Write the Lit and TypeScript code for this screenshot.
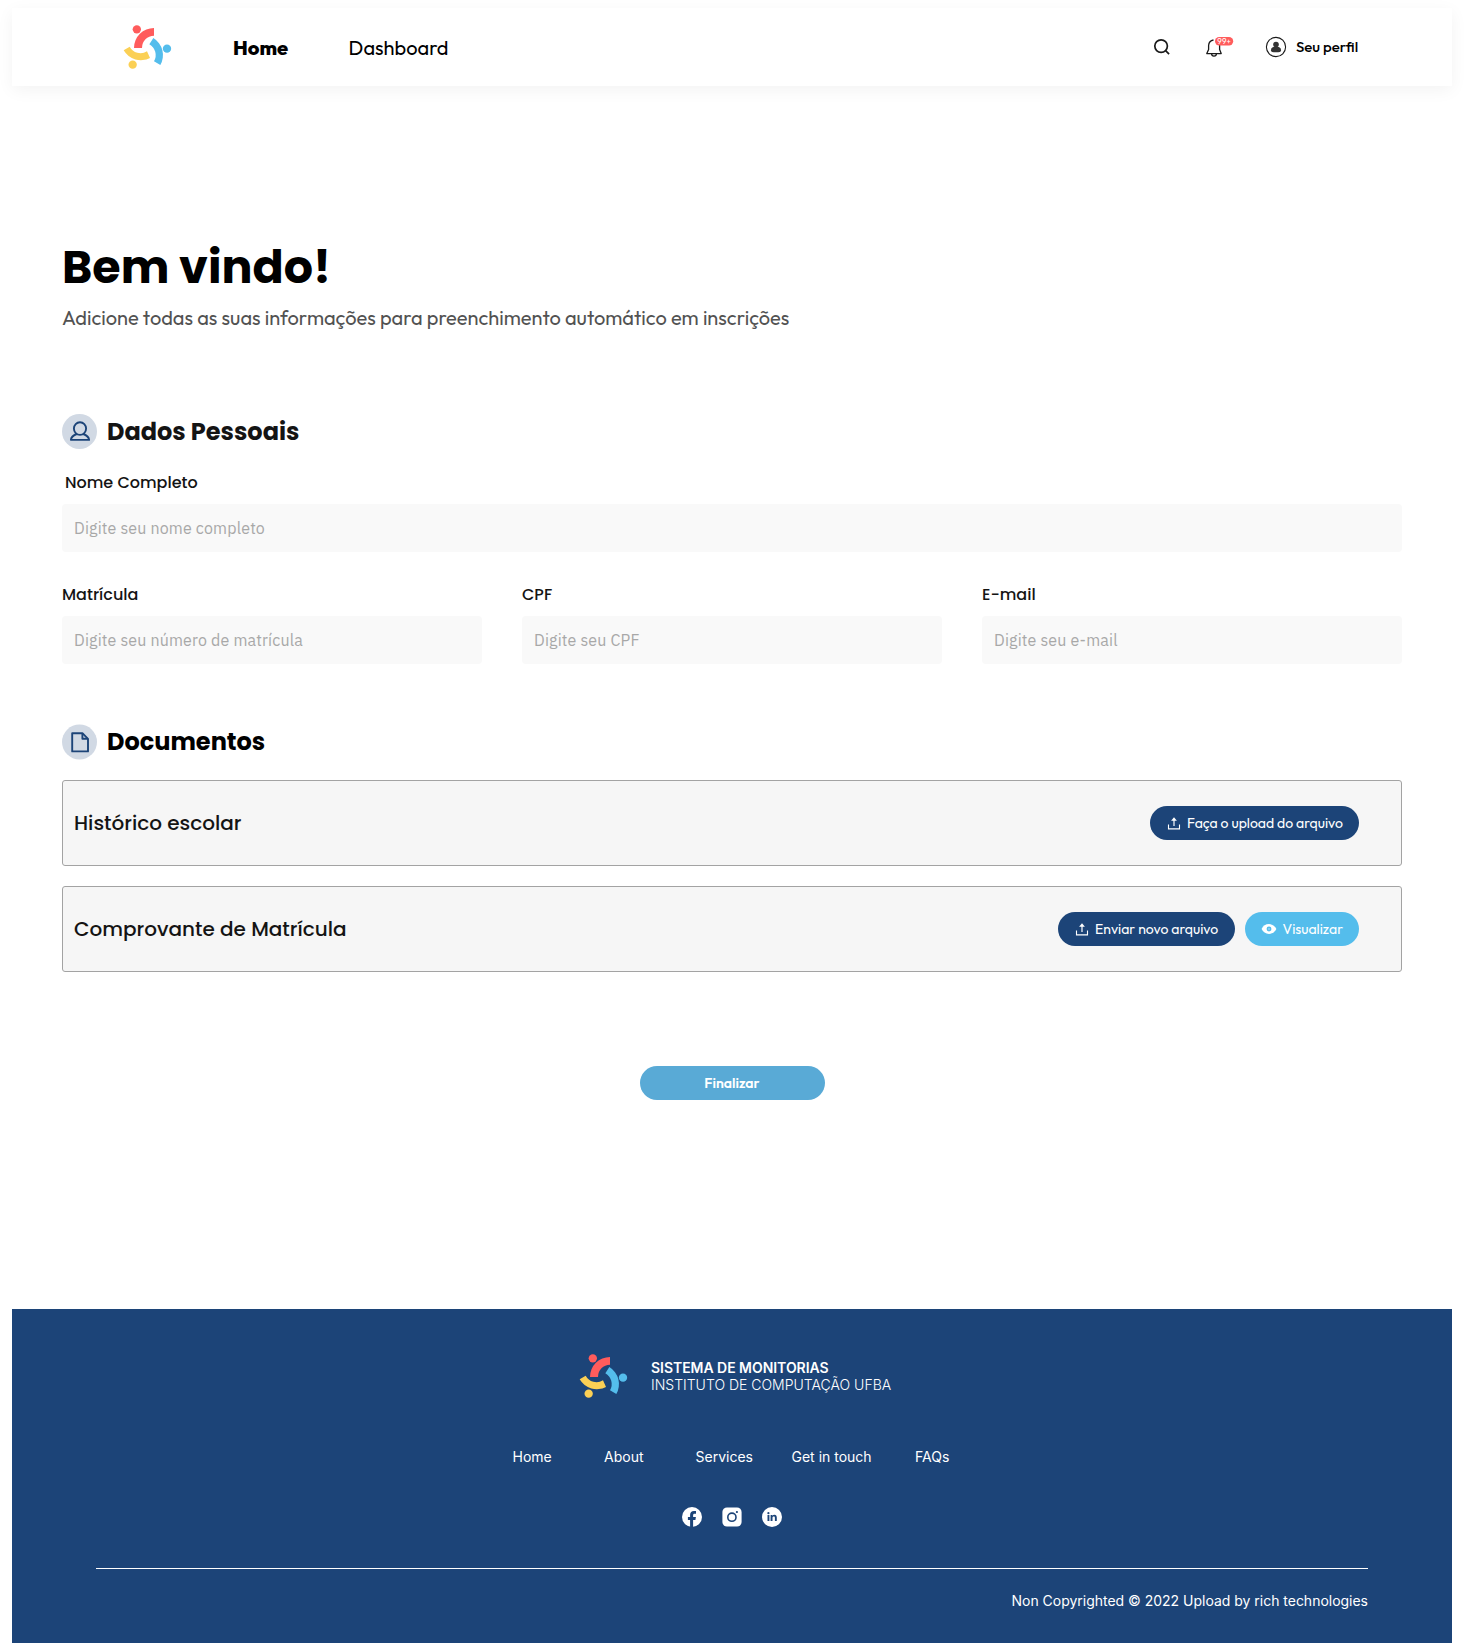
import { LitElement, html, css, svg } from "lit";
import { customElement } from "lit/decorators.js";

@customElement("brand-mark")
class BrandMark extends LitElement {
  static styles = css`
    :host { display: block; width: 50px; height: 46px; flex: none; }
    .mark { display: block; width: 50px; height: 46px; }
  `;
  render() {
    return html`<svg class="mark" viewBox="366 72 150 138">
      <g fill="#ff5c5c">
        <circle cx="410.5" cy="88" r="12.5" />
        <path d="M462 84 A60 60 0 0 0 402 144 H426 A36.5 36.5 0 0 1 462 107 Z" />
      </g>
      <g fill="#54bdec">
        <circle cx="501" cy="146" r="12.5" />
        <path d="M460 114 A60 60 0 0 1 481 195 L462 184 A37 37 0 0 0 448 133 Z" />
      </g>
      <g fill="#fbd055">
        <circle cx="398" cy="194" r="12.5" />
        <path d="M371 151 A60 60 0 0 0 450 174 L441 154 A37 37 0 0 1 389 140 Z" />
      </g>
    </svg>`;
  }
}

@customElement("top-bar")
class TopBar extends LitElement {
  static styles = css`
    :host { display: block; }
    .bar {
      display: flex; align-items: center; height: 78px; box-sizing: border-box;
      padding: 0 92px 0 110px; background: #fff;
      box-shadow: 0 4px 16px rgba(0, 0, 0, 0.05);
      font-family: Outfit, sans-serif; color: #000;
    }
    .links { display: flex; gap: 60.5px; margin-left: 61px; font-size: 20px; line-height: 25px; }
    .link { font-weight: 380; }
    .link.active { font-weight: 800; }
    .tools { display: flex; align-items: center; margin-left: auto; }
    .search { display: block; width: 24px; height: 24px; margin-right: 28px; }
    .bell { display: block; width: 34px; height: 24px; margin-right: 29px; }
    .badge { font: 400 8px Outfit, sans-serif; fill: #fff; }
    .avatar { display: block; width: 22px; height: 22px; margin-right: 9px; }
    .profile { width: 64px; font-size: 15px; line-height: 20px; font-weight: 500; white-space: nowrap; }
  `;
  render() {
    return html`<header class="bar">
      <brand-mark></brand-mark>
      <nav class="links">
        <span class="link active">Home</span>
        <span class="link">Dashboard</span>
      </nav>
      <div class="tools">
        <svg class="search" viewBox="0 0 24 24" fill="none" stroke="#1a1a1a" stroke-width="1.7">
          <circle cx="11.1" cy="11.1" r="6.3" /><path d="M15.6 15.6 L19.1 19.1" />
        </svg>
        <svg class="bell" viewBox="0 0 34 24">
          <path d="M11.5 5 A6 6 0 0 0 6.6 10.5 V14.5 L4.8 18.6 H19.2 L17.6 14.5 V10" fill="none" stroke="#1a1a1a" stroke-width="1.3" stroke-linejoin="round" />
          <path d="M9.6 18.8 A2.4 2.4 0 0 0 14.4 18.8" fill="none" stroke="#1a1a1a" stroke-width="1.3" />
          <rect x="13" y="2" width="18.2" height="8.4" rx="4.2" fill="#ff5c5c" />
          <text class="badge" x="22.1" y="9" text-anchor="middle" textLength="13.5">99+</text>
        </svg>
        <svg class="avatar" viewBox="0 0 22 22">
          <circle cx="11" cy="11" r="9.6" fill="none" stroke="#1a1a1a" stroke-width="1.1" />
          <circle cx="11" cy="8.6" r="2.8" fill="#333" />
          <path d="M5.9 14.4 C5.9 11.8 8 10.6 11 10.6 S16.1 11.8 16.1 14.4 C16.1 15.8 14.5 16.2 11 16.2 S5.9 15.8 5.9 14.4 Z" fill="#333" />
        </svg>
        <span class="profile">Seu perfil</span>
      </div>
    </header>`;
  }
}

const uploadIcon = svg`<path d="M1.5 8.6 V12.9 H12.5 V8.6" fill="none" stroke="#fff" stroke-width="1.1" /><path d="M7 10 V4" fill="none" stroke="#fff" stroke-width="1.2" /><path d="M7 1.3 L9.9 4.8 H4.1 Z" fill="#fff" />`;

@customElement("profile-form")
class ProfileForm extends LitElement {
  static styles = css`
    :host { display: block; }
    .page { padding: 147px 50px 0; font-family: Poppins, sans-serif; color: #141414; }
    .title { margin: 0; font-size: 46px; line-height: 69px; font-weight: 700; color: #000; }
    .subtitle { margin: 3px 0 0; font: 400 20px/25px Outfit, sans-serif; color: #525252; }
    .section { display: flex; align-items: center; gap: 10px; height: 35px; margin-top: 84px; }
    .section.docs { height: 36px; margin-top: 60px; }
    .section-icon { display: block; width: 35px; height: 35px; }
    .docs .section-icon { align-self: flex-start; overflow: visible; }
    .section-title { margin: 0; align-self: flex-start; font-size: 24px; line-height: 35px; font-weight: 700; }
    .docs .section-title { color: #000; }
    .field { display: flex; flex-direction: column; gap: 9px; }
    .field.full { margin-top: 22px; }
    .full .label { padding-left: 3px; }
    .label { font-size: 16px; line-height: 24px; font-weight: 500; }
    .input {
      box-sizing: border-box; width: 100%; height: 48px; border: 0; border-radius: 4px;
      padding: 0 12px; background: #f9f9f9; outline: none;
      font: 400 16px "IBM Plex Sans", sans-serif; letter-spacing: 0.16px; color: #141414;
    }
    .input::placeholder { color: #a8a8a8; opacity: 1; }
    .columns { display: grid; grid-template-columns: repeat(3, 1fr); gap: 40px; margin-top: 31px; }
    .cards { display: flex; flex-direction: column; gap: 20px; margin-top: 20px; }
    .card {
      display: flex; align-items: center; justify-content: space-between; box-sizing: border-box;
      height: 86px; padding: 0 42px 0 11px; border: 1px solid #a3a3a3; border-radius: 3px; background: #f6f6f6;
    }
    .card-name { font-size: 20px; line-height: 30px; font-weight: 500; }
    .actions { display: flex; gap: 10px; }
    .button {
      display: flex; align-items: center; box-sizing: border-box; height: 34px; border: 0; border-radius: 17px;
      margin: 0; padding: 0 0 0 17px; background: #1c4478; color: #fff; white-space: nowrap;
      font: 370 14px/18px Outfit, sans-serif;
    }
    .upload { width: 209px; }
    .resend { width: 177px; }
    .view { width: 114px; padding-left: 16px; background: #54bdec; }
    .up { display: block; width: 14px; height: 14px; margin-right: 6px; }
    .eye { display: block; width: 16px; height: 16px; margin-right: 5.5px; }
    .finish {
      width: 185px; margin: 94px auto 0; padding: 0; justify-content: center; background: #59aad6; font-weight: 600;
    }
  `;
  field(label: string, hint: string, full = false) {
    return html`<label class="field ${full ? "full" : ""}">
      <span class="label">${label}</span>
      <input class="input" placeholder=${hint} />
    </label>`;
  }
  render() {
    return html`<main class="page">
      <h1 class="title">Bem vindo!</h1>
      <p class="subtitle">Adicione todas as suas informações para preenchimento automático em inscrições</p>
      <div class="section">
        <svg class="section-icon" viewBox="0 0 35 35">
          <circle cx="17.5" cy="17.5" r="17.5" fill="#d1d9e4" />
          <g fill="none" stroke="#1c4478" stroke-width="1.9" stroke-linejoin="round">
            <ellipse cx="18" cy="14.6" rx="6.1" ry="6.3" />
            <path d="M14.8 20 C11.6 21.2 9.2 22.8 8.9 25.9 H27.1 C26.8 22.8 24.4 21.2 21.2 20" />
          </g>
        </svg>
        <h2 class="section-title">Dados Pessoais</h2>
      </div>
      ${this.field("Nome Completo", "Digite seu nome completo", true)}
      <div class="columns">
        ${this.field("Matrícula", "Digite seu número de matrícula")}
        ${this.field("CPF", "Digite seu CPF")}
        ${this.field("E-mail", "Digite seu e-mail")}
      </div>
      <div class="section docs">
        <svg class="section-icon" viewBox="0 0 35 35">
          <circle cx="17.5" cy="18" r="17.5" fill="#d1d9e4" />
          <g fill="none" stroke="#1c4478" stroke-width="1.9" stroke-linejoin="round">
            <path d="M10.2 9.2 H20.4 L26 14.8 V27.4 H10.2 Z" />
            <path d="M20.4 9.4 V14.8 H25.8" />
          </g>
        </svg>
        <h2 class="section-title">Documentos</h2>
      </div>
      <div class="cards">
        <div class="card">
          <span class="card-name">Histórico escolar</span>
          <div class="actions">
            <button class="button upload"><svg class="up" viewBox="0 0 14 14">${uploadIcon}</svg>Faça o upload do arquivo</button>
          </div>
        </div>
        <div class="card">
          <span class="card-name">Comprovante de Matrícula</span>
          <div class="actions">
            <button class="button resend"><svg class="up" viewBox="0 0 14 14">${uploadIcon}</svg>Enviar novo arquivo</button>
            <button class="button view">
              <svg class="eye" viewBox="0 0 16 16">
                <path d="M0.6 8 C2 5 4.7 3.1 8 3.1 S14 5 15.4 8 C14 11 11.3 12.9 8 12.9 S2 11 0.6 8 Z" fill="#fff" />
                <circle cx="8" cy="8" r="2.4" fill="#54bdec" /><circle cx="8" cy="8" r="0.9" fill="#9ad8f4" />
              </svg>Visualizar</button>
          </div>
        </div>
      </div>
      <button class="button finish">Finalizar</button>
    </main>`;
  }
}

@customElement("site-footer")
class SiteFooter extends LitElement {
  static styles = css`
    :host { display: block; }
    .footer {
      box-sizing: border-box; height: 334px; padding: 44px 84px 0; background: #1c4478; color: #fff;
      display: flex; flex-direction: column; font: 380 14px/17px Inter, sans-serif;
    }
    .brand { display: flex; align-items: center; gap: 23px; margin-left: 482px; height: 46px; }
    .names { display: flex; flex-direction: column; white-space: nowrap; }
    .name { font-weight: 600; letter-spacing: -0.04px; }
    .institute { font-weight: 360; }
    .links { display: grid; grid-template-columns: 91.5px 91.5px 96px 123.5px auto; margin: 49px 0 0 416.5px; white-space: nowrap; }
    .social { display: flex; justify-content: center; gap: 20px; margin-top: 42px; }
    .icon { display: block; width: 20px; height: 20px; }
    .line { height: 1px; margin-top: 41px; background: #fff; }
    .copy { margin: 23px 0 0; text-align: right; letter-spacing: -0.015px; }
  `;
  render() {
    return html`<footer class="footer">
      <div class="brand">
        <brand-mark></brand-mark>
        <div class="names">
          <span class="name">SISTEMA DE MONITORIAS</span>
          <span class="institute">INSTITUTO DE COMPUTAÇÃO UFBA</span>
        </div>
      </div>
      <nav class="links">
        ${["Home", "About", "Services", "Get in touch", "FAQs"].map((l) => html`<span>${l}</span>`)}
      </nav>
      <div class="social">
        <svg class="icon" viewBox="0 0 20 20">
          <circle cx="10" cy="10" r="10" fill="#fff" />
          <path d="M8.1 20 V12.9 H5.9 V10 H8.1 V8 C8.1 5.4 9.6 4.1 11.9 4.1 H14 V6.7 H12.6 C11.5 6.7 11.1 7.3 11.1 8.2 V10 H13.9 L13.4 12.9 H11.1 V20 Z" fill="#1c4478" />
        </svg>
        <svg class="icon" viewBox="0 0 20 20">
          <rect x="0.4" y="0.4" width="19.2" height="19.2" rx="4.6" fill="#fff" />
          <circle cx="9.9" cy="10.2" r="4.1" fill="none" stroke="#1c4478" stroke-width="1.6" />
          <circle cx="14.9" cy="5" r="1.1" fill="#1c4478" />
        </svg>
        <svg class="icon" viewBox="0 0 20 20">
          <circle cx="10" cy="10" r="10" fill="#fff" />
          <g fill="#1c4478">
            <circle cx="6.4" cy="6.2" r="1.1" />
            <rect x="5.5" y="8" width="1.9" height="6" />
            <path d="M8.6 8 H10.4 V8.8 C10.9 8.1 11.6 7.8 12.4 7.8 C14.1 7.8 14.8 8.9 14.8 10.6 V14 H12.9 V10.9 C12.9 10 12.6 9.5 11.8 9.5 C11 9.5 10.5 10 10.5 10.9 V14 H8.6 Z" />
          </g>
        </svg>
      </div>
      <div class="line"></div>
      <p class="copy">Non Copyrighted © 2022 Upload by rich technologies</p>
    </footer>`;
  }
}

@customElement("app-root")
class AppRoot extends LitElement {
  static styles = css`
    :host { display: block; }
    .shell {
      display: flex; flex-direction: column; box-sizing: border-box; height: 1643px;
      padding: 8px 12px 0; background: #fff; overflow: hidden;
    }
    .footer { margin-top: auto; }
  `;
  render() {
    return html`<div class="shell">
      <top-bar></top-bar>
      <profile-form></profile-form>
      <site-footer class="footer"></site-footer>
    </div>`;
  }
}
